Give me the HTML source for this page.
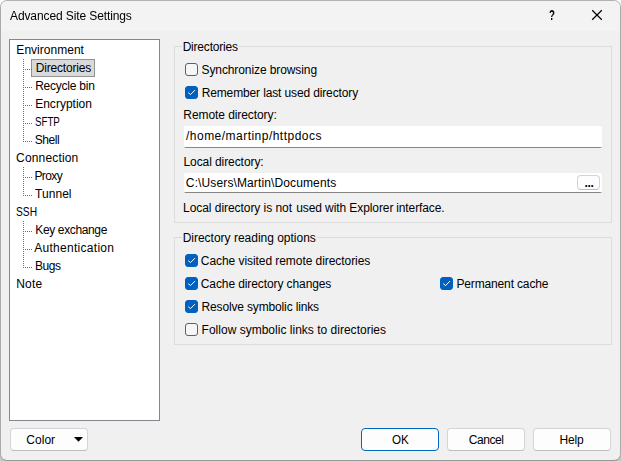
<!DOCTYPE html>
<html><head><meta charset="utf-8"><title>Advanced Site Settings</title>
<style>
html,body{margin:0;padding:0;background:#fff;}
body{width:621px;height:461px;overflow:hidden;position:relative;font-family:"Liberation Sans",sans-serif;font-size:12px;color:#000;}
.sh{position:absolute;width:12px;height:12px;background:#c6c6c6;}
#win{position:absolute;left:0;top:0;width:621px;height:461px;box-sizing:border-box;border:1px solid;border-color:#b2b2b2 #ababab #989898 #aaaaaa;border-radius:7px;background:#f0f0f0;overflow:hidden;}
#c{position:absolute;left:-1px;top:-1px;width:621px;height:461px;}
#tbar{position:absolute;left:0;top:0;width:621px;height:31px;background:#f3f3f3;}
.t{position:absolute;white-space:nowrap;line-height:14px;height:14px;}
#tree{position:absolute;left:9px;top:39px;width:149px;height:380px;border:1px solid #828790;background:#fff;}
.sel{position:absolute;left:31px;top:59px;width:62px;height:16px;border:1px solid #939393;background:#d9d9d9;}
.grp{position:absolute;border:1px solid #dcdcdc;box-sizing:border-box;}
.lbl{background:#f0f0f0;}
.cb{position:absolute;width:13px;height:13px;box-sizing:border-box;border:1px solid #606060;border-radius:3px;background:#f6f6f6;}
.cb.on{background:#0060c0;border-color:#0060c0;}
.cb svg{position:absolute;left:-1px;top:-1px;}
.inp{position:absolute;background:linear-gradient(#fff,#fff calc(100% - 1px),#868686 calc(100% - 1px));border-radius:2px;box-sizing:border-box;}
.btn{position:absolute;background:#fdfdfd;border:1px solid #d4d4d4;border-bottom-color:#bdbdbd;border-radius:4px;box-sizing:border-box;}
</style></head><body>
<div class="sh" style="left:0;top:449px"></div><div class="sh" style="left:609px;top:449px"></div>
<div id="win"><div id="c">
<div id="tbar"></div>
<svg style="position:absolute;left:591px;top:9px" width="12" height="12" viewBox="0 0 12 12"><path d="M1.2 1.2L10.8 10.8M10.8 1.2L1.2 10.8" stroke="#000" stroke-width="1.25" fill="none"/></svg>
<div id="tree"></div>
<div class="sel"></div>
<svg style="position:absolute;left:0;top:0" width="160" height="300" shape-rendering="crispEdges"><g stroke="#6e6e6e" stroke-width="1" stroke-dasharray="1 1" fill="none"><path d="M23.5 59V142"/><path d="M25 69.5H32"/><path d="M25 87.5H32"/><path d="M25 105.5H32"/><path d="M25 123.5H32"/><path d="M25 141.5H32"/><path d="M23.5 167V196"/><path d="M25 177.5H32"/><path d="M25 195.5H32"/><path d="M23.5 221V268"/><path d="M25 231.5H32"/><path d="M25 249.5H32"/><path d="M25 267.5H32"/></g></svg>
<span class="t" id="t0" style="left:16.37px;top:43px;letter-spacing:0.022px;">Environment</span>
<span class="t" id="t1" style="left:35.68px;top:61px;letter-spacing:-0.173px;">Directories</span>
<span class="t" id="t2" style="left:35.17px;top:79px;letter-spacing:-0.226px;">Recycle bin</span>
<span class="t" id="t3" style="left:35.17px;top:97px;letter-spacing:0.014px;">Encryption</span>
<span class="t" id="t4" style="left:35.17px;top:115px;transform:scaleX(0.8096);transform-origin:0 0;">SFTP</span>
<span class="t" id="t5" style="left:34.66px;top:133px;letter-spacing:-0.43px;">Shell</span>
<span class="t" id="t6" style="left:16.1px;top:151px;letter-spacing:0.162px;">Connection</span>
<span class="t" id="t7" style="left:34.48px;top:169px;letter-spacing:-0.608px;">Proxy</span>
<span class="t" id="t8" style="left:34.98px;top:187px;letter-spacing:0.064px;">Tunnel</span>
<span class="t" id="t9" style="left:16.19px;top:205px;transform:scaleX(0.8521);transform-origin:0 0;">SSH</span>
<span class="t" id="t10" style="left:35.31px;top:223px;letter-spacing:-0.366px;">Key exchange</span>
<span class="t" id="t11" style="left:34.25px;top:241px;letter-spacing:0.283px;">Authentication</span>
<span class="t" id="t12" style="left:35px;top:259px;letter-spacing:-0.411px;">Bugs</span>
<span class="t" id="t13" style="left:16.2px;top:277px;letter-spacing:0.219px;">Note</span>
<div class="grp" style="left:174px;top:46px;width:438px;height:177px;"></div>
<span class="t" id="g1" style="left:182.65px;top:40px;letter-spacing:-0.201px;padding:0 1px 0 1px;margin-left:-1px;background:#f0f0f0;">Directories</span>
<div class="cb" style="left:185px;top:63px"></div>
<span class="t" id="c1" style="left:201.5px;top:63px;letter-spacing:-0.096px;">Synchronize browsing</span>
<div class="cb on" style="left:185px;top:86px"><svg width="13" height="13" viewBox="0 0 13 13"><path d="M3.5 6.9L5.5 8.6L9.7 4.4" stroke="#fff" stroke-width="1" fill="none" stroke-linecap="round" stroke-linejoin="round"/></svg></div>
<span class="t" id="c2" style="left:201.67px;top:86px;letter-spacing:-0.133px;">Remember last used directory</span>
<span class="t" id="l1" style="left:183.34px;top:108px;letter-spacing:-0.079px;">Remote directory:</span>
<div class="inp" style="left:184px;top:126px;width:418px;height:22px;"></div>
<span class="t" id="v1" style="left:186.06px;top:129px;letter-spacing:0.474px;">/home/martinp/httpdocs</span>
<span class="t" id="l2" style="left:183.44px;top:155px;letter-spacing:-0.077px;">Local directory:</span>
<div class="inp" style="left:184px;top:173px;width:418px;height:20px;"></div>
<span class="t" id="v2" style="left:185.86px;top:176px;letter-spacing:0.121px;">C:\Users\Martin\Documents</span>
<div class="btn" style="left:577px;top:175px;width:23px;height:15px;"></div>
<span class="t" id="dots" style="left:584.6px;top:176px;font-weight:bold;letter-spacing:-0.35px;">...</span>
<span class="t" id="l3a" style="left:183.04px;top:201px;letter-spacing:-0.05px;">Local directory is not </span>
<span class="t" id="l3b" style="left:296.16px;top:201px;letter-spacing:-0.083px;">used with Explorer </span>
<span class="t" id="l3c" style="left:396.28px;top:201px;letter-spacing:-0.122px;">interface.</span>
<div class="grp" style="left:174px;top:237px;width:438px;height:108px;"></div>
<span class="t" id="g2" style="left:182.65px;top:231px;letter-spacing:-0.008px;padding:0 1px 0 1px;margin-left:-1px;background:#f0f0f0;">Directory reading options</span>
<div class="cb on" style="left:185px;top:254px"><svg width="13" height="13" viewBox="0 0 13 13"><path d="M3.5 6.9L5.5 8.6L9.7 4.4" stroke="#fff" stroke-width="1" fill="none" stroke-linecap="round" stroke-linejoin="round"/></svg></div>
<span class="t" id="c3" style="left:200.8px;top:254px;letter-spacing:-0.062px;">Cache visited remote directories</span>
<div class="cb on" style="left:185px;top:277px"><svg width="13" height="13" viewBox="0 0 13 13"><path d="M3.5 6.9L5.5 8.6L9.7 4.4" stroke="#fff" stroke-width="1" fill="none" stroke-linecap="round" stroke-linejoin="round"/></svg></div>
<span class="t" id="c4" style="left:200.8px;top:277px;letter-spacing:-0.099px;">Cache directory changes</span>
<div class="cb on" style="left:440px;top:277px"><svg width="13" height="13" viewBox="0 0 13 13"><path d="M3.5 6.9L5.5 8.6L9.7 4.4" stroke="#fff" stroke-width="1" fill="none" stroke-linecap="round" stroke-linejoin="round"/></svg></div>
<span class="t" id="c5" style="left:456.43px;top:277px;letter-spacing:-0.145px;">Permanent cache</span>
<div class="cb on" style="left:185px;top:300px"><svg width="13" height="13" viewBox="0 0 13 13"><path d="M3.5 6.9L5.5 8.6L9.7 4.4" stroke="#fff" stroke-width="1" fill="none" stroke-linecap="round" stroke-linejoin="round"/></svg></div>
<span class="t" id="c6" style="left:201.57px;top:300px;letter-spacing:-0.153px;">Resolve symbolic links</span>
<div class="cb" style="left:185px;top:323px"></div>
<span class="t" id="c7" style="left:201.57px;top:323px;letter-spacing:0.012px;">Follow symbolic links to directories</span>
<div class="btn" style="left:10px;top:428px;width:78px;height:23px;"></div>
<span class="t" id="b0" style="left:26.2px;top:433px;letter-spacing:0.063px;">Color</span>
<svg style="position:absolute;left:74px;top:437px" width="9" height="5" viewBox="0 0 9 5"><path d="M0 0H9L4.5 4.8Z" fill="#000"/></svg>
<div class="btn" style="left:361px;top:428px;width:78px;height:23px;border-color:#0067c0;"></div>
<span class="t" id="b1" style="left:391.52px;top:433px;transform:scaleX(0.9695);transform-origin:0 0;">OK</span>
<div class="btn" style="left:447px;top:428px;width:78px;height:23px;"></div>
<span class="t" id="b2" style="left:468.66px;top:433px;letter-spacing:-0.405px;">Cancel</span>
<div class="btn" style="left:533px;top:428px;width:78px;height:23px;"></div>
<span class="t" id="b3" style="left:559.46px;top:433px;letter-spacing:-0.16px;">Help</span>
<span class="t" id="title" style="left:9.66px;top:9px;letter-spacing:-0.105px;will-change:transform;">Advanced Site Settings</span>
<span class="t" id="q" style="left:548.8px;top:7px;font-size:14px;line-height:16px;height:16px;font-weight:bold;transform:scaleX(0.68);transform-origin:0 0;will-change:transform;">?</span>
</div></div>
</body></html>
